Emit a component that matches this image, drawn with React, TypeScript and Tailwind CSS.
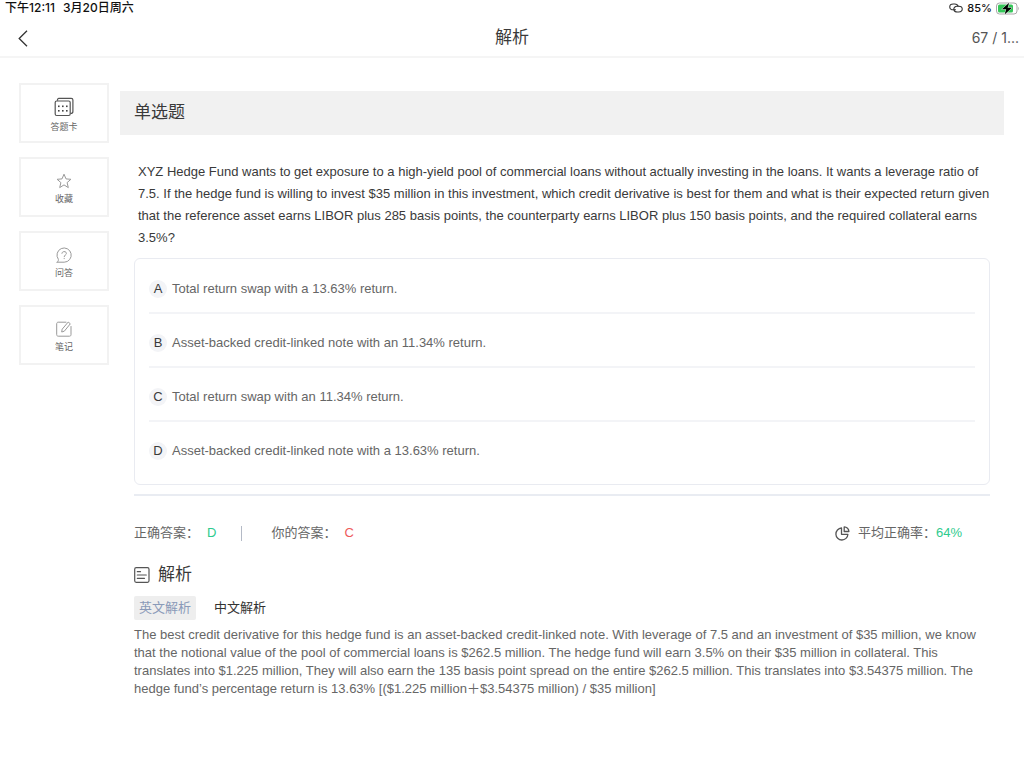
import React, { useState } from 'react';

interface Option {
    key: string;
    text: string;
}

const options: Option[] = [
    { key: 'A', text: 'Total return swap with a 13.63% return.' },
    { key: 'B', text: 'Asset-backed credit-linked note with an 11.34% return.' },
    { key: 'C', text: 'Total return swap with an 11.34% return.' },
    { key: 'D', text: 'Asset-backed credit-linked note with a 13.63% return.' },
];

const LinkIcon = () => (
    <svg width="14" height="10" viewBox="0 0 28 20" fill="none" stroke="#333" strokeWidth="2.2" strokeLinecap="round">
        <path d="M13 13.500H8.500C4.500 13.500 1.500 11.200 1.500 7.800C1.500 4.500 4.500 2 8.500 2H11.500C15 2 17.500 3.800 18.200 6.500" />
        <path d="M15 6.500H19.500C23.500 6.500 26.500 8.800 26.500 12.200C26.500 15.500 23.500 18 19.500 18H16.500C13 18 10.500 16.200 9.800 13.500C9 10.500 11 7.500 15 6.500" />
    </svg>
);

const BatteryIcon = () => (
    <svg width="24" height="13" viewBox="0 0 24 13">
        <rect x="0.500" y="1" width="20.500" height="11" rx="3" fill="#fff" stroke="#a8a8a8" />
        <path d="M22.300 4.800C23.300 5.200 23.300 7.800 22.300 8.200Z" fill="#a8a8a8" />
        <rect x="2" y="2.500" width="15" height="8" rx="1.600" fill="#35c759" />
        <path d="M13.200 0.800L5.800 7.200H10.200L8.600 12.400L16 5.800H11.600Z" fill="#000" stroke="#fff" strokeWidth="0.800" paintOrder="stroke" />
    </svg>
);

const BackIcon = () => (
    <svg width="10" height="17" viewBox="0 0 10 17" fill="none" stroke="#333" strokeWidth="1.300">
        <path d="M9 0.800L1.200 8.500L9 16.200" />
    </svg>
);

const CardIcon = () => (
    <svg width="20" height="20" viewBox="0 0 20 20" fill="none" stroke="#555" strokeWidth="1.200" strokeLinejoin="round">
        <rect x="1.200" y="4" width="15" height="14.500" rx="1.500" />
        <path d="M3.500 3.800V2.800C3.500 2 4 1.400 4.800 1.400H17.200C18.200 1.400 18.900 2 18.900 3V14.500C18.900 15.600 18 16.500 16.500 16.500" />
        <g fill="#444" stroke="none">
            <rect x="4" y="8.500" width="1.600" height="1.600" />
            <rect x="8" y="8.500" width="1.600" height="1.600" />
            <rect x="12" y="8.500" width="1.600" height="1.600" />
            <rect x="4" y="13" width="1.600" height="1.600" />
            <rect x="8" y="13" width="1.600" height="1.600" />
            <rect x="12" y="13" width="1.600" height="1.600" />
        </g>
    </svg>
);

const StarIcon = () => (
    <svg width="16" height="16" viewBox="0 0 16 16" fill="none" stroke="#999" strokeWidth="1" strokeLinejoin="round">
        <path d="M8 1.200L10 5.900L14.900 6.300L11.100 9.600L12.300 14.600L8 11.900L3.700 14.600L4.900 9.600L1.100 6.300L6 5.900Z" />
    </svg>
);

const QuestionIcon = () => (
    <svg width="16" height="16" viewBox="0 0 16 16" fill="none" stroke="#999" strokeWidth="1" strokeLinecap="round" strokeLinejoin="round">
        <path d="M1.200 15.200H8.200A7.100 7.100 0 1 0 2.300 12.200C2.700 12.900 2.300 14.200 1.200 15.200Z" />
        <path d="M5.900 6.300C5.900 4 10.400 3.900 10.400 6.400C10.400 8 8.200 8 8.200 9.700" />
        <path d="M8.200 11.500V11.700" />
    </svg>
);

const NoteIcon = () => (
    <svg width="16" height="16" viewBox="0 0 16 16" fill="none" stroke="#999" strokeWidth="1" strokeLinecap="round" strokeLinejoin="round">
        <path d="M10 1.200H2.200C1.300 1.200 0.700 1.800 0.700 2.700V13.700C0.700 14.600 1.300 15.200 2.200 15.200H13.500C14.400 15.200 15 14.600 15 13.700V5.500" />
        <path d="M12.500 1.300L14.300 2.800L8.300 10.200L5.700 11L6.100 8.600Z" />
    </svg>
);

const PieIcon = () => (
    <svg width="15" height="15" viewBox="0 0 15 15" fill="none" stroke="#555" strokeWidth="1.300" strokeLinejoin="round">
        <path d="M6.500 2A6 6 0 1 0 12.900 8.300H6.500Z" />
        <path d="M9.200 0.900V5.500H13.900C13.900 3 11.800 0.900 9.200 0.900Z" />
    </svg>
);

const AnalysisIcon = () => (
    <svg width="16" height="16" viewBox="0 0 16 16" fill="none" stroke="#555" strokeWidth="1.200" strokeLinecap="round">
        <rect x="0.700" y="0.700" width="14.300" height="14.600" rx="1.500" />
        <path d="M3.300 4.700H6.500M3.300 8H12.300M3.300 11.300H10.500" />
    </svg>
);

const tools = [
    { label: '答题卡', icon: CardIcon },
    { label: '收藏', icon: StarIcon },
    { label: '问答', icon: QuestionIcon },
    { label: '笔记', icon: NoteIcon },
];

const tabs = ['英文解析', '中文解析'];

const App: React.FC = () => {
    const [tab, setTab] = useState(tabs[0]);

    return (
        <div className="min-h-screen bg-white text-[#3a3a3a] font-['Liberation_Sans','Noto_Sans_CJK_SC',sans-serif]">
            <div className="flex items-center justify-between h-4 pl-[5px] pr-1 leading-4 font-medium text-[#111] font-['Inter','Noto_Sans_CJK_SC',sans-serif]">
                <div className="flex gap-2 text-[12px]">
                    <span>下午12:11</span>
                    <span>3月20日周六</span>
                </div>
                <div className="flex items-center gap-1 text-[11px]">
                    <LinkIcon />
                    <span>85%</span>
                    <BatteryIcon />
                </div>
            </div>

            <header className="grid grid-cols-3 items-center h-[42px] pt-1 px-[5px] border-b-2 border-[#f5f5f5]">
                <button aria-label="返回" className="justify-self-start pl-[13px]">
                    <BackIcon />
                </button>
                <h1 className="justify-self-center text-[17px] leading-6">解析</h1>
                <span className="justify-self-end text-[14px] leading-6 text-[#555] font-['Inter',sans-serif]">67 / 1...</span>
            </header>

            <div className="flex items-start gap-[11px] pt-[25px] pl-[19px] pr-5">
                <nav className="flex flex-col shrink-0 gap-[14px] w-[90px]">
                    {tools.map(tool => (
                        <button
                            key={tool.label}
                            className="flex flex-col items-center justify-center gap-1 h-[60px] pt-1 border-2 border-[#f2f2f2] text-[9px] leading-3 text-[#666]"
                        >
                            <tool.icon />
                            <span>{tool.label}</span>
                        </button>
                    ))}
                </nav>

                <main className="flex-1 min-w-0 pt-2">
                    <h2 className="flex items-center h-11 px-[14px] bg-[#f1f1f1] text-[17px] leading-6">单选题</h2>

                    <div className="px-[14px]">
                        <p className="mt-[26px] pl-1 text-[13px] leading-[22px]">
                            XYZ Hedge Fund wants to get exposure to a high-yield pool of commercial loans without actually
                            investing in the loans. It wants a leverage ratio of 7.5. If the hedge fund is willing to invest
                            $35 million in this investment, which credit derivative is best for them and what is their
                            expected return given that the reference asset earns LIBOR plus 285 basis points, the
                            counterparty earns LIBOR plus 150 basis points, and the required collateral earns 3.5%?
                        </p>

                        <ol className="mt-[9px] px-[14px] pt-px pb-[10px] border border-[#e9ebf1] rounded-md">
                            {options.map(option => (
                                <li key={option.key} className="border-b-2 border-[#f3f4f7] last:border-b-0">
                                    <button className="flex items-center w-full h-[52px] pt-[5px] gap-[5px] text-left text-[13px] leading-[18px]">
                                        <span className="flex items-center justify-center w-[18px] h-[18px] rounded-full bg-[#f3f4f7]">
                                            {option.key}
                                        </span>
                                        <span className="text-[#666]">{option.text}</span>
                                    </button>
                                </li>
                            ))}
                        </ol>

                        <div className="flex items-center justify-between mt-[9px] pt-[27px] pr-7 border-t-2 border-[#e9ecf2] text-[13px] leading-5 text-[#666]">
                            <div className="flex items-center">
                                <span>正确答案：</span>
                                <span className="ml-2 text-[#2fcb8e]">D</span>
                                <span className="w-px h-[15px] mx-[25px] bg-[#b4bac6]" />
                                <span className="ml-1">你的答案：</span>
                                <span className="ml-2 text-[#ee5a5a]">C</span>
                            </div>
                            <div className="flex items-center">
                                <PieIcon />
                                <span className="ml-2">平均正确率：</span>
                                <span className="text-[#2fcb8e]">64%</span>
                            </div>
                        </div>

                        <h2 className="flex items-center gap-2 mt-5 text-[17px] leading-6">
                            <AnalysisIcon />
                            解析
                        </h2>

                        <div className="flex gap-[13px] mt-[9px]">
                            {tabs.map(name => (
                                <button
                                    key={name}
                                    onClick={() => setTab(name)}
                                    className={
                                        tab === name
                                            ? 'h-6 px-[5px] rounded-xs bg-[#eeeeee] text-[13px] text-[#8a9ab8]'
                                            : 'h-6 px-[5px] rounded-xs text-[13px] text-[#333]'
                                    }
                                >
                                    {name}
                                </button>
                            ))}
                        </div>

                        <p className="mt-[6px] pb-6 text-[13px] leading-[18px] text-[#666]">
                            The best credit derivative for this hedge fund is an asset-backed credit-linked note. With leverage
                            of 7.5 and an investment of $35 million, we know that the notional value of the pool of commercial
                            loans is $262.5 million. The hedge fund will earn 3.5% on their $35 million in collateral. This
                            translates into $1.225 million, They will also earn the 135 basis point spread on the entire $262.5
                            million. This translates into $3.54375 million. The hedge fund’s percentage return is 13.63%
                            [($1.225 million＋$3.54375 million) / $35 million]
                        </p>
                    </div>
                </main>
            </div>
        </div>
    );
};

export default App;
